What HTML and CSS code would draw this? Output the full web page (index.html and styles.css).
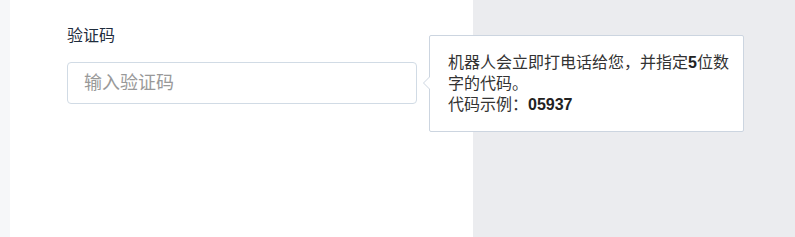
FILE: index.html
```html
<!DOCTYPE html>
<html lang="zh-CN">
<head>
    <meta charset="UTF-8">
    <meta name="viewport" content="width=device-width, initial-scale=1.0">
    <title>验证码</title>
    <link rel="stylesheet" href="styles.css">
</head>
<body>

    <div class="page">
        <!-- left strip -->
        <div class="side"></div>

        <!-- form panel -->
        <div class="panel">
            <div class="form-item">
                <label class="form-label" for="code">验证码</label>
                <div class="input-wrap">
                    <input id="code" class="form-input" type="text" placeholder="输入验证码">

                    <!-- hint popover -->
                    <div class="popover">
                        机器人会立即打电话给您，并指定<b>5</b>位数字的代码。<br>
                        代码示例：<b class="sample">05937</b>
                    </div>
                </div>
            </div>
        </div>

        <div class="rest"></div>
    </div>

</body>
</html>
```

FILE: styles.css
```css
/* General */
body {
    margin: 0;
    padding: 0;
    font-family: "Liberation Sans", "Noto Sans CJK SC", sans-serif;
    color: #333;
    background-color: #ebecef;
}

.page {
    display: flex;
    height: 237px;
    overflow: hidden;
}

.side {
    width: 10px;
    background-color: #f6f7f9;
}

.panel {
    width: 463px;
    padding: 26px 0 0 57px;
    box-sizing: border-box;
    background: #fff;
}

.rest {
    flex: 1;
}

/* Form */
.form-label {
    display: block;
    font-size: 16px;
    line-height: 20px;
    color: #1f2d3d;
    margin-bottom: 16px;
}

.input-wrap {
    position: relative;
    width: 350px;
}

.form-input {
    display: block;
    width: 100%;
    height: 42px;
    box-sizing: border-box;
    padding: 0 16px;
    border: 1px solid #d1dbe5;
    border-radius: 4px;
    font-family: inherit;
    font-size: 18px;
    color: #1f2d3d;
    outline: none;
}

.form-input::placeholder {
    color: #999;
}

/* Popover */
.popover {
    position: absolute;
    left: 362px;
    top: -27px;
    width: 283px;
    padding: 16px 12px 16px 18px;
    background: #fff;
    border: 1px solid #ccd5e0;
    border-radius: 2px;
    font-size: 16px;
    line-height: 21px;
    color: #333;
    z-index: 2;
}

.popover b {
    font-weight: bold;
    color: #222;
}

.popover::before,
.popover::after {
    content: "";
    position: absolute;
    top: 41px;
    border-style: solid;
    border-color: transparent;
}

.popover::before {
    left: -7px;
    border-width: 6px 6px 6px 0;
    border-right-color: #ccd5e0;
}

.popover::after {
    left: -6px;
    border-width: 6px 6px 6px 0;
    border-right-color: #fff;
}
```
